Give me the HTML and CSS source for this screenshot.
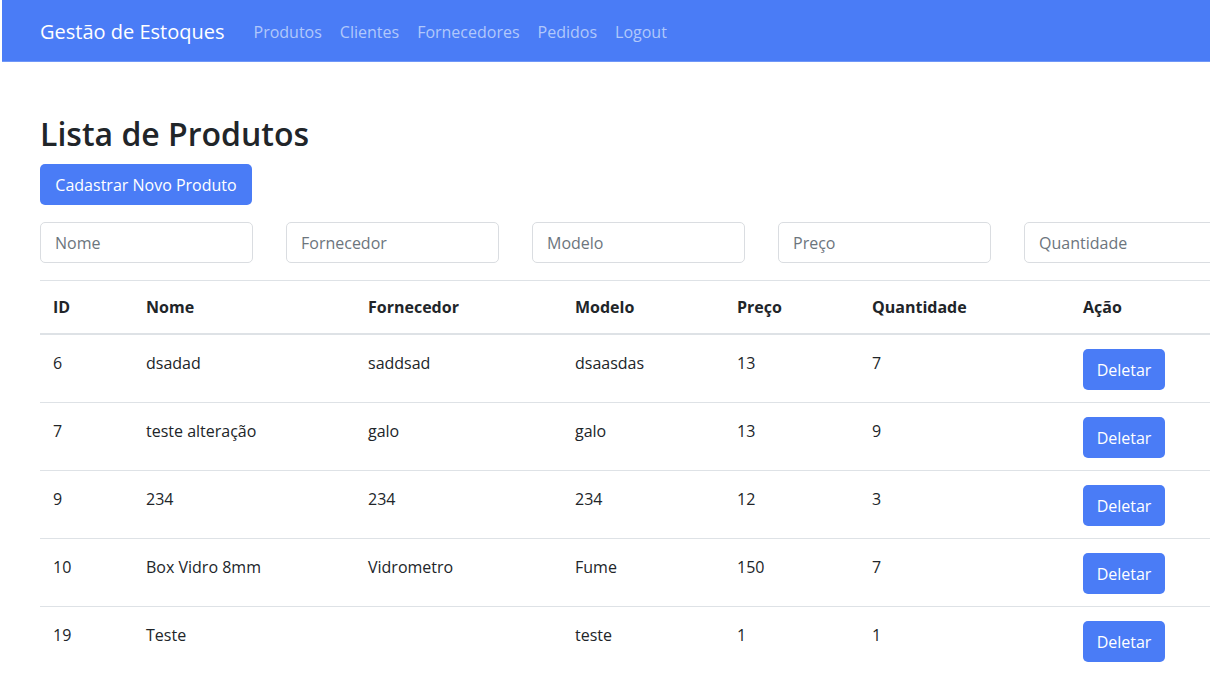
FILE: index.html
```html
<!DOCTYPE html>
<html lang="pt-BR">
<head>
<meta charset="utf-8">
<title>Gestão de Estoques</title>
<link rel="stylesheet" href="styles.css">
</head>
<body>
<nav class="navbar">
  <a class="brand" href="#">Gestão de Estoques</a>
  <ul class="nav-links">
    <li><a href="#">Produtos</a></li>
    <li><a href="#">Clientes</a></li>
    <li><a href="#">Fornecedores</a></li>
    <li><a href="#">Pedidos</a></li>
    <li><a href="#">Logout</a></li>
  </ul>
</nav>
<main class="container">
  <h1 class="title">Lista de Produtos</h1>
  <button class="btn btn-primary btn-new">Cadastrar Novo Produto</button>
  <div class="filters">
    <input class="field" type="text" placeholder="Nome">
    <input class="field" type="text" placeholder="Fornecedor">
    <input class="field" type="text" placeholder="Modelo">
    <input class="field" type="text" placeholder="Preço">
    <input class="field" type="text" placeholder="Quantidade">
  </div>
  <table class="table">
    <colgroup>
      <col class="c-id"><col class="c-nome"><col class="c-forn"><col class="c-mod"><col class="c-preco"><col class="c-qtd"><col class="c-acao">
    </colgroup>
    <thead>
      <tr><th>ID</th><th>Nome</th><th>Fornecedor</th><th>Modelo</th><th>Preço</th><th>Quantidade</th><th>Ação</th></tr>
    </thead>
    <tbody>
      <tr><td>6</td><td>dsadad</td><td>saddsad</td><td>dsaasdas</td><td>13</td><td>7</td><td><button class="btn btn-primary btn-del">Deletar</button></td></tr>
      <tr><td>7</td><td>teste alteração</td><td>galo</td><td>galo</td><td>13</td><td>9</td><td><button class="btn btn-primary btn-del">Deletar</button></td></tr>
      <tr><td>9</td><td>234</td><td>234</td><td>234</td><td>12</td><td>3</td><td><button class="btn btn-primary btn-del">Deletar</button></td></tr>
      <tr><td>10</td><td>Box Vidro 8mm</td><td>Vidrometro</td><td>Fume</td><td>150</td><td>7</td><td><button class="btn btn-primary btn-del">Deletar</button></td></tr>
      <tr><td>19</td><td>Teste</td><td></td><td>teste</td><td>1</td><td>1</td><td><button class="btn btn-primary btn-del">Deletar</button></td></tr>
    </tbody>
  </table>
</main>
</body>
</html>
```

FILE: styles.css
```css
html, body {
  margin: 0;
  padding: 0;
  overflow: hidden;
  background: #ffffff;
}
body {
  font-family: "Open Sans", "Noto Sans", sans-serif;
  font-size: 16px;
  color: #212529;
  width: 1210px;
}
.navbar {
  margin-left: 2px;
  width: 1208px;
  height: 62px;
  box-sizing: border-box;
  background: #4a7cf6;
  border-bottom: 1px solid #6f97f8;
  display: flex;
  align-items: center;
  padding: 2px 0 0 38px;
}
.brand {
  color: #ffffff;
  text-decoration: none;
  font-size: 20px;
  margin-right: 29px;
  line-height: 28px;
}
.nav-links {
  list-style: none;
  display: flex;
  gap: 18px;
  margin: 0;
  padding: 0;
}
.nav-links a {
  color: #b1c8fb;
  text-decoration: none;
  font-size: 16px;
  line-height: 24px;
}
.container {
  padding: 51px 0 0 40px;
  overflow: hidden;
}
.title {
  font-size: 32px;
  font-weight: 600;
  line-height: 42px;
  margin: 0 0 9px 0;
  color: #212529;
}
.btn {
  font-family: inherit;
  border: none;
  border-radius: 5px;
  cursor: pointer;
}
.btn-primary {
  background: #4a7cf6;
  color: #ffffff;
}
.btn-new {
  height: 41px;
  width: 212px;
  font-size: 16px;
  padding: 0;
  display: block;
}
.filters {
  display: flex;
  gap: 33px;
  margin-top: 17px;
}
.field {
  width: 213px;
  height: 41px;
  box-sizing: border-box;
  border: 1px solid #dadde1;
  border-radius: 5px;
  padding: 0 14px;
  font-family: inherit;
  font-size: 16px;
  color: #212529;
  flex: none;
}
.field::placeholder {
  color: #6c757d;
}
.table {
  margin-top: 17px;
  border-collapse: collapse;
  table-layout: fixed;
  width: 1198px;
  border-top: 1px solid #dee2e6;
}
.c-id { width: 93px; }
.c-nome { width: 222px; }
.c-forn { width: 207px; }
.c-mod { width: 162px; }
.c-preco { width: 135px; }
.c-qtd { width: 211px; }
.c-acao { width: 168px; }
.table th {
  text-align: left;
  font-weight: 700;
  font-size: 16px;
  padding: 12px 13px;
  line-height: 28px;
  border-bottom: 2px solid #dee2e6;
}
.table td {
  vertical-align: top;
  font-size: 16px;
  line-height: 28px;
  padding: 14px 13px 12px;
  border-bottom: 1px solid #dee2e6;
}
.table tbody tr:last-child td {
  border-bottom: none;
}
.btn-del {
  width: 82px;
  height: 41px;
  font-size: 16px;
  padding: 0;
  display: block;
}
```
